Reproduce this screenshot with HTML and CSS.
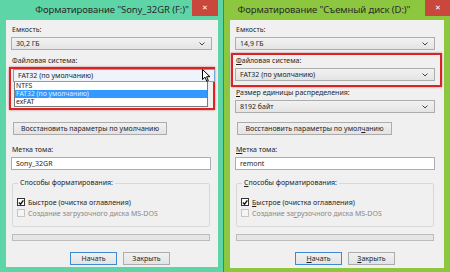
FILE: index.html
```html
<!DOCTYPE html>
<html lang="ru">
<head>
    <meta charset="UTF-8">
    <title>Форматирование</title>
    <link rel="stylesheet" href="styles.css">
</head>
<body>

<div class="desk">

    <!-- left window: drop-down list opened -->
    <div class="dlg dlg-teal">
        <div class="title">
            <span>Форматирование "Sony_32GR (F:)"</span>
            <span class="close">&#x2715;</span>
        </div>
        <div class="pane">
            <div class="lbl">Емкость:</div>
            <div class="combo">
                <span>30,2 ГБ</span>
                <svg class="chev" width="6" height="4" viewBox="0 0 6 4"><path d="M0.5 0.5 L3 3 L5.5 0.5" fill="none" stroke="#444" stroke-width="1"/></svg>
            </div>
            <div class="lbl gap6">Файловая система:</div>
            <div class="mark mark-left">
                <div class="combo combo-focus">
                    <span>FAT32 (по умолчанию)</span>
                    <svg class="chev" width="6" height="4" viewBox="0 0 6 4"><path d="M0.5 0.5 L3 3 L5.5 0.5" fill="none" stroke="#444" stroke-width="1"/></svg>
                    <svg class="cursor" width="9" height="13" viewBox="0 0 9 13"><path d="M0.5 0.5 L0.5 10.5 L3 8.2 L4.8 12.3 L6.3 11.6 L4.6 7.7 L8 7.7 Z" fill="#fff" stroke="#000" stroke-width="1"/></svg>
                </div>
                <ul class="list">
                    <li>NTFS</li>
                    <li class="sel">FAT32 (по умолчанию)</li>
                    <li>exFAT</li>
                </ul>
            </div>
            <button class="btn btn-reset reset-left">Восстановить параметры по умолчанию</button>
            <div class="lbl gap10">Метка тома:</div>
            <div class="field">Sony_32GR</div>
            <div class="group">
                <span class="legend">Способы форматирования:</span>
                <div class="check"><span class="box on"><svg width="7" height="7" viewBox="0 0 7 7"><path d="M1 3.5 L3 5.5 L6.2 1" fill="none" stroke="#111" stroke-width="1.6"/></svg></span>Быстрое (очистка оглавления)</div>
                <div class="check off"><span class="box"></span>Создание загрузочного диска MS-DOS</div>
            </div>
            <div class="progress"></div>
            <div class="actions">
                <button class="btn btn-main">Начать</button>
                <button class="btn">Закрыть</button>
            </div>
        </div>
    </div>

    <!-- right window: file system field marked -->
    <div class="dlg dlg-green">
        <div class="title title-right">
            <span>Форматирование "Съемный диск (D:)"</span>
            <span class="close">&#x2715;</span>
        </div>
        <div class="pane">
            <div class="lbl">Емкость:</div>
            <div class="combo">
                <span>14,9 ГБ</span>
                <svg class="chev" width="6" height="4" viewBox="0 0 6 4"><path d="M0.5 0.5 L3 3 L5.5 0.5" fill="none" stroke="#444" stroke-width="1"/></svg>
            </div>
            <div class="mark mark-right">
                <div class="lbl"><u>Ф</u>айловая система:</div>
                <div class="combo gap3">
                    <span>FAT32 (по умолчанию)</span>
                    <svg class="chev" width="6" height="4" viewBox="0 0 6 4"><path d="M0.5 0.5 L3 3 L5.5 0.5" fill="none" stroke="#444" stroke-width="1"/></svg>
                </div>
            </div>
            <div class="lbl gap1"><u>Р</u>азмер единицы распределения:</div>
            <div class="combo">
                <span>8192 байт</span>
                <svg class="chev" width="6" height="4" viewBox="0 0 6 4"><path d="M0.5 0.5 L3 3 L5.5 0.5" fill="none" stroke="#444" stroke-width="1"/></svg>
            </div>
            <button class="btn btn-reset reset-right">Восстановить параметры по умол<u>ч</u>анию</button>
            <div class="lbl gap10"><u>М</u>етка тома:</div>
            <div class="field">remont</div>
            <div class="group">
                <span class="legend"><u>С</u>пособы форматирования:</span>
                <div class="check"><span class="box on"><svg width="7" height="7" viewBox="0 0 7 7"><path d="M1 3.5 L3 5.5 L6.2 1" fill="none" stroke="#111" stroke-width="1.6"/></svg></span><u>Б</u>ыстрое (очистка оглавления)</div>
                <div class="check off"><span class="box"></span>Создание за<u>г</u>рузочного диска MS-DOS</div>
            </div>
            <div class="progress"></div>
            <div class="actions">
                <button class="btn btn-main"><u>Н</u>ачать</button>
                <button class="btn"><u>З</u>акрыть</button>
            </div>
        </div>
    </div>

</div>

</body>
</html>
```

FILE: styles.css
```css
body {
    margin: 0;
    font-family: "Noto Sans", "Open Sans", sans-serif;
    font-size: 7px;
    color: #1e1e1e;
    background: #4f7f68;
}
.desk {
    display: flex;
    gap: 1px;
    width: 450px;
    height: 272px;
    overflow: hidden;
}
.dlg {
    display: flex;
    flex-direction: column;
    height: 272px;
}
.dlg-teal {
    width: 223px;
    background: #5ed5a6;
    padding: 0 5px 5px 6px;
    box-sizing: border-box;
}
.dlg-green {
    width: 226px;
    background: #8cc73f;
    padding: 0 6px 4px 6px;
    box-sizing: border-box;
}
.title {
    position: relative;
    height: 20px;
    line-height: 20px;
    text-align: center;
    font-size: 9.5px;
    letter-spacing: -0.1px;
    color: #2a2a2a;
    white-space: nowrap;
}
.title-right {
    padding-right: 26px;
}
.close {
    position: absolute;
    top: 0;
    right: 0;
    width: 26px;
    height: 16px;
    line-height: 16px;
    background: #c9473d;
    color: #fff;
    font-size: 7px;
    letter-spacing: 0;
    text-align: center;
}
.dlg-green .close {
    right: -7px;
}
.pane {
    flex: 1;
    background: #f0f0f0;
    padding: 5px 6px 0 5px;
    display: flex;
    flex-direction: column;
    align-items: flex-start;
}
u {
    text-decoration: underline;
    text-underline-offset: 1px;
}
.lbl {
    height: 10px;
    line-height: 10px;
    padding-left: 1px;
    white-space: nowrap;
}
.gap1 { margin-top: 1px; }
.gap3 { margin-top: 3px; }
.gap6 { margin-top: 6px; }
.gap10 { margin-top: 10px; }

.combo {
    position: relative;
    box-sizing: border-box;
    width: 201px;
    height: 13px;
    margin-top: 2px;
    padding: 0 4px;
    display: flex;
    align-items: center;
    justify-content: space-between;
    background: linear-gradient(#f2f2f2, #e4e4e4);
    border: 1px solid #adadad;
    white-space: nowrap;
}
.dlg-green .combo {
    width: 200px;
}
.combo-focus {
    margin-top: 0;
    background: #eef4fa;
    border-color: #6ea6dc;
}
.chev {
    margin-right: 2px;
}
.cursor {
    position: absolute;
    right: 3px;
    top: -1px;
}

.mark {
    box-sizing: border-box;
    border: 2px solid #dc2323;
    box-shadow: 0 0 2px rgba(160, 0, 0, 0.5);
}
.mark-left {
    width: 206px;
    height: 43px;
    margin: 1px 0 0 -2px;
    padding: 0 2px;
}
.mark-left .combo {
    width: 202px;
}
.mark-right {
    width: 211px;
    height: 34px;
    margin: 3px 0 0 -4px;
    padding: 1px 2px 0 2px;
}
.list {
    list-style: none;
    margin: 0 3px 0 1px;
    padding: 0;
    font-size: 6.8px;
    background: #fff;
    border: 1px solid #7a7a7a;
    border-top: none;
}
.list li {
    height: 8px;
    line-height: 8px;
    padding-left: 1px;
}
.list .sel {
    background: #3399ff;
    color: #dfefff;
}

.btn {
    box-sizing: border-box;
    height: 13px;
    padding: 0;
    font-family: inherit;
    font-size: 7px;
    color: #1e1e1e;
    background: linear-gradient(#f1f1f1, #e3e3e3);
    border: 1px solid #acacac;
    border-radius: 0;
    white-space: nowrap;
}
.btn-reset {
    margin: 12px 0 0 2px;
    width: 154px;
}
.reset-right {
    margin-top: 9px;
    width: 155px;
}
.btn-main {
    border-color: #3d8ad0;
}

.field {
    box-sizing: border-box;
    width: 200px;
    height: 13px;
    margin-top: 2px;
    padding-left: 4px;
    line-height: 11px;
    background: #fff;
    border: 1px solid #abadb3;
}
.group {
    box-sizing: border-box;
    width: 198px;
    margin: 13px 0 0 1px;
    padding: 0 0 8px 4px;
    border: 1px solid #d8d8d8;
    border-radius: 2px;
}
.legend {
    display: inline-block;
    margin: -6px 0 0 1px;
    padding: 0 2px;
    height: 10px;
    line-height: 10px;
    background: #f0f0f0;
    vertical-align: top;
}
.check {
    display: flex;
    align-items: center;
    height: 10px;
    margin-top: 4px;
    white-space: nowrap;
}
.check + .check {
    margin-top: 1px;
}
.box {
    box-sizing: border-box;
    width: 8px;
    height: 8px;
    margin-right: 3px;
    display: flex;
    align-items: center;
    justify-content: center;
    background: #f4f4f4;
    border: 1px solid #c6c6c6;
}
.box.on {
    background: #fff;
    border-color: #333;
}
.check.off {
    color: #8a8a8a;
}
.progress {
    box-sizing: border-box;
    width: 198px;
    height: 7px;
    margin: 7px 0 0 1px;
    background: #e6e6e6;
    border: 1px solid #bcbcbc;
}
.actions {
    display: flex;
    gap: 6px;
    margin: 11px 0 0 59px;
}
.actions .btn {
    width: 47px;
}
.dlg-green .actions {
    margin-left: 60px;
}
```
